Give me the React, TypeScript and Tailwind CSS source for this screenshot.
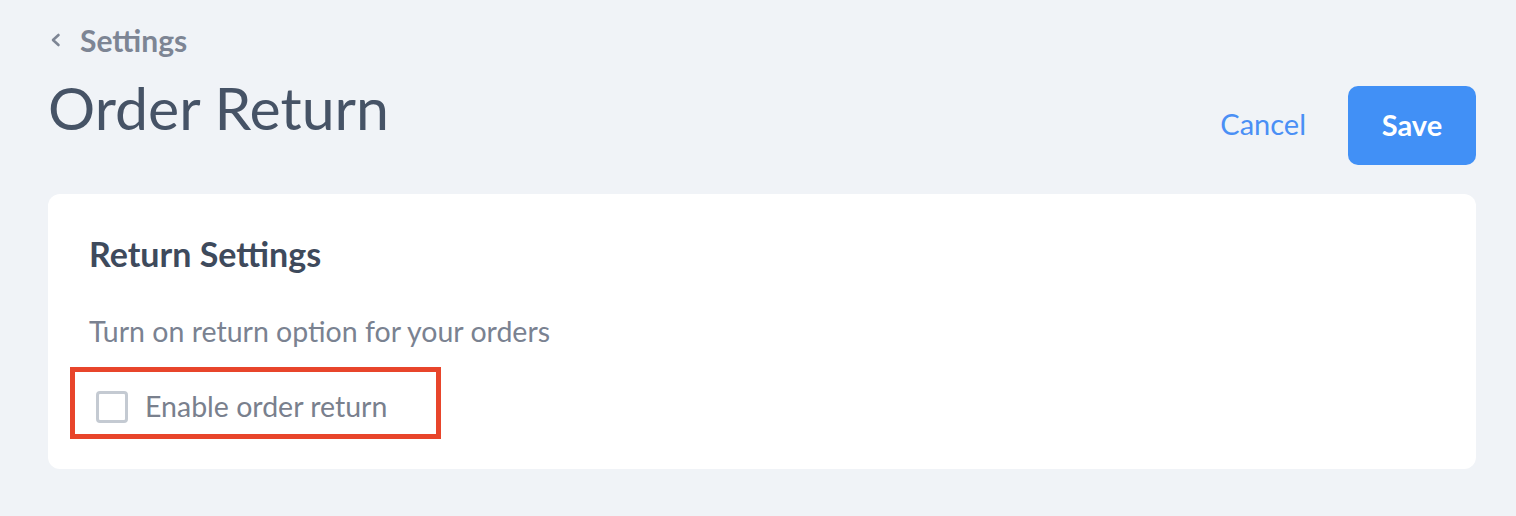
import React from "react";

export default function App() {
  return (
    <div
      className="w-[1516px] h-[516px] bg-[#f0f3f7] pl-[48px] pr-[40px] pt-[24px] overflow-hidden"
      style={{ fontFamily: "Lato, 'Noto Sans', sans-serif" }}
    >
      <div className="flex items-center h-[32px] text-[#7d8594]">
        <svg width="12" height="16" viewBox="0 0 12 16" className="ml-[1px]">
          <path d="M9.5 3 L4 8 L9.5 13" fill="none" stroke="#7d8594" strokeWidth="2.6" strokeLinecap="round" strokeLinejoin="round" />
        </svg>
        <span className="ml-[19px] text-[30px] font-bold leading-none">Settings</span>
      </div>
      <div className="flex items-start justify-between mt-[22px]">
        <h1 className="text-[59px] leading-none text-[#465366] font-normal">Order Return</h1>
        <div className="flex items-center mt-[8px]">
          <button className="text-[29px] leading-none text-[#4a8ff5] mr-[42px] mb-[5px]">Cancel</button>
          <button className="w-[128px] h-[79px] rounded-[10px] bg-[#4190f6] text-white text-[29px] leading-none font-bold pb-[2px]">Save</button>
        </div>
      </div>
      <div className="mt-[29px] bg-white rounded-[12px] h-[275px] pl-[41px] pt-[43px]">
        <div className="text-[34px] font-bold text-[#3e4a5c] leading-none">Return Settings</div>
        <div className="mt-[46px] text-[28.5px] text-[#7a8291] leading-none">Turn on return option for your orders</div>
        <div className="mt-[21px] -ml-[19px] w-[371px] h-[72px] border-[5px] border-[#e8452b] flex items-center pl-[21px] pt-[8px]">
          <div className="w-[32px] h-[32px] border-[3px] border-[#c4cad2] rounded-[4px]" />
          <span className="ml-[17px] text-[28.5px] text-[#79808d] leading-none">Enable order return</span>
        </div>
      </div>
    </div>
  );
}
